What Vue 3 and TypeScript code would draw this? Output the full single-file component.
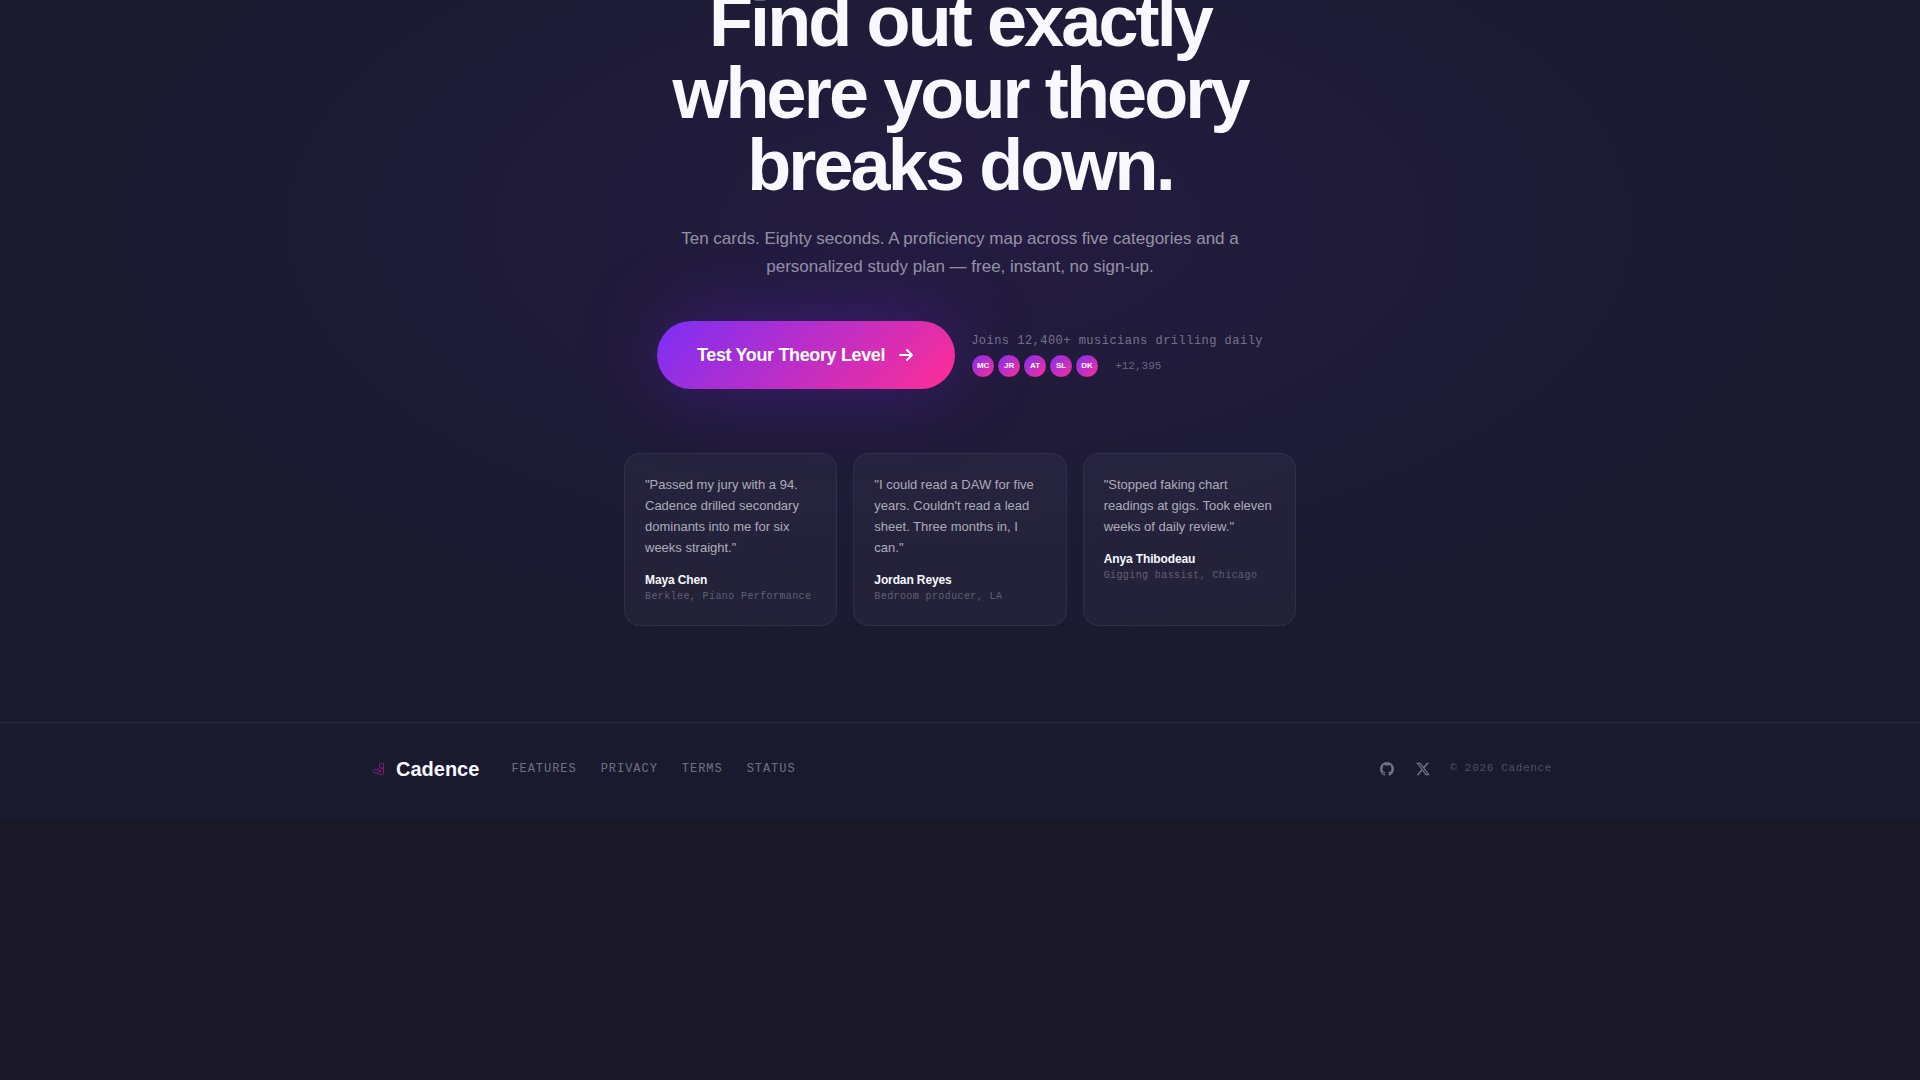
<script setup lang="ts">
interface Quote {
  text: string
  name: string
  role: string
}

const initials: string[] = ['MC', 'JR', 'AT', 'SL', 'DK']

const quotes: Quote[] = [
  {
    text: '"Passed my jury with a 94. Cadence drilled secondary dominants into me for six weeks straight."',
    name: 'Maya Chen',
    role: 'Berklee, Piano Performance',
  },
  {
    text: '"I could read a DAW for five years. Couldn\'t read a lead sheet. Three months in, I can."',
    name: 'Jordan Reyes',
    role: 'Bedroom producer, LA',
  },
  {
    text: '"Stopped faking chart readings at gigs. Took eleven weeks of daily review."',
    name: 'Anya Thibodeau',
    role: 'Gigging bassist, Chicago',
  },
]

const links: string[] = ['Features', 'Privacy', 'Terms', 'Status']
</script>

<template>
  <div class="page">
    <main class="closing">
      <div class="inner">
        <h1>Find out exactly where your theory breaks down.</h1>
        <p class="lead">
          Ten cards. Eighty seconds. A proficiency map across five categories and a personalized
          study plan — free, instant, no sign-up.
        </p>

        <div class="action">
          <button type="button" class="cta">
            Test Your Theory Level
            <svg viewBox="0 0 18 18" width="18" height="18" aria-hidden="true">
              <path d="M3 9h12M10 4l5 5-5 5" />
            </svg>
          </button>
          <div class="proof">
            <p class="joins">Joins 12,400+ musicians drilling daily</p>
            <div class="people">
              <span v-for="i in initials" :key="i" class="avatar">{{ i }}</span>
              <span class="more">+12,395</span>
            </div>
          </div>
        </div>

        <div class="quotes">
          <figure v-for="q in quotes" :key="q.name" class="card">
            <blockquote>{{ q.text }}</blockquote>
            <figcaption>
              <span class="name">{{ q.name }}</span>
              <span class="role">{{ q.role }}</span>
            </figcaption>
          </figure>
        </div>
      </div>
    </main>

    <footer>
      <div class="bar">
        <div class="left">
          <a href="#" class="brand">
            <svg viewBox="0 0 20 20" width="20" height="20" aria-hidden="true">
              <defs>
                <linearGradient id="note" x1="0" y1="0" x2="1" y2="1">
                  <stop offset="0" stop-color="#8a1fd0" />
                  <stop offset="1" stop-color="#e0108c" />
                </linearGradient>
              </defs>
              <path d="M11.500 4.500h4v9.500q0 1.500-1.500 1.500h-2.500q-1.500 0-1.500-1.500h-3.500l-2-2 2-1.500h3l2 2 3.500-3.500h-3.500z" />
              <path d="M9 9.500l4.500 4M10 13.500l2-1.500" />
            </svg>
            Cadence
          </a>
          <nav>
            <a v-for="l in links" :key="l" href="#">{{ l }}</a>
          </nav>
        </div>
        <div class="right">
          <div class="social">
            <a href="#" aria-label="GitHub">
              <svg viewBox="0 0 20 20" width="14" height="14">
                <path transform="translate(-2 -2)" d="M12 2C6.480 2 2 6.480 2 12c0 4.420 2.870 8.170 6.840 9.500.5.080.66-.23.66-.5v-1.690c-2.770.6-3.360-1.340-3.360-1.340-.46-1.160-1.110-1.470-1.110-1.470-.91-.62.070-.6.070-.6 1 .070 1.530 1.030 1.530 1.030.87 1.520 2.340 1.070 2.910.83.090-.65.350-1.090.63-1.340-2.220-.25-4.550-1.110-4.550-4.920 0-1.110.38-2 1.030-2.710-.1-.25-.45-1.290.1-2.640 0 0 .84-.27 2.750 1.020.79-.22 1.650-.33 2.500-.33s1.710.11 2.500.33c1.910-1.290 2.750-1.020 2.750-1.020.55 1.350.2 2.390.1 2.640.65.71 1.030 1.600 1.030 2.710 0 3.820-2.340 4.660-4.570 4.910.36.31.69.92.69 1.850V21c0 .27.16.59.67.5C19.140 20.160 22 16.420 22 12c0-5.520-4.480-10-10-10z" />
              </svg>
            </a>
            <a href="#" aria-label="X">
              <svg viewBox="1 1 22 22" width="14" height="14">
                <path d="M18.244 2.250h3.308l-7.227 8.260 8.502 11.240H16.170l-5.214-6.817L4.990 21.750H1.680l7.730-8.835L1.254 2.250H8.080l4.713 6.231zm-1.161 17.520h1.833L7.084 4.126H5.117z" />
              </svg>
            </a>
          </div>
          <span class="legal">© 2026 Cadence</span>
        </div>
      </div>
    </footer>
  </div>
</template>

<style>
html {
  background: #1a1826;
}
body {
  margin: 0;
}
</style>

<style scoped>
.page {
  overflow: hidden;
  background: #1a1a2e;
  color: #f8f8ff;
  font-family: 'Liberation Sans', Arial, sans-serif;
}
h1,
p,
figure,
blockquote {
  margin: 0;
}
a {
  color: inherit;
  text-decoration: none;
}
svg {
  display: block;
}
.closing {
  padding: 0 24px 96px;
  background: radial-gradient(ellipse 47% 440px at 50% 240px, rgba(124, 45, 237, 0.1), transparent);
}
.inner {
  max-width: 672px;
  margin: 0 auto;
  text-align: center;
}
h1 {
  margin: -15px auto 0;
  max-width: 640px;
  font-size: 72px;
  line-height: 72px;
  letter-spacing: -0.04em;
  font-weight: 700;
}
.lead {
  max-width: 576px;
  margin: 24px auto 0;
  font-size: 17px;
  line-height: 28px;
  color: rgba(248, 248, 255, 0.55);
}
.action {
  display: flex;
  align-items: center;
  justify-content: center;
  gap: 16px;
  margin-top: 40px;
}
.cta {
  display: flex;
  align-items: center;
  gap: 12px;
  height: 68px;
  padding: 0 40px;
  border: 0;
  border-radius: 34px;
  background: linear-gradient(135deg, #7b2ff7, #ff2d95);
  box-shadow: 0 0 80px rgba(110, 30, 220, 0.4);
  color: #fff;
  font: 700 18px/20px 'Liberation Sans', Arial, sans-serif;
  letter-spacing: -0.02em;
  cursor: pointer;
}
.cta svg {
  fill: none;
  stroke: currentColor;
  stroke-width: 2;
  stroke-linecap: round;
  stroke-linejoin: round;
}
.proof {
  text-align: left;
  font-family: 'Liberation Mono', 'Courier New', monospace;
}
.joins {
  font-size: 12px;
  line-height: 18px;
  letter-spacing: 0.04em;
  color: rgba(248, 248, 255, 0.4);
}
.people {
  display: flex;
  align-items: center;
  gap: 2px;
  margin-top: 4px;
}
.avatar {
  box-sizing: border-box;
  width: 24px;
  height: 24px;
  border: 1px solid #1a1a2e;
  border-radius: 50%;
  background: linear-gradient(135deg, #7b2ff7, #ff2d95) border-box;
  color: #fff;
  font: 700 8px/22px 'Liberation Sans', Arial, sans-serif;
  text-align: center;
}
.more {
  margin-left: 14px;
  font-size: 11px;
  line-height: 16px;
  color: rgba(248, 248, 255, 0.35);
}
.quotes {
  display: grid;
  grid-template-columns: repeat(3, 1fr);
  gap: 16px;
  margin-top: 64px;
  text-align: left;
}
.card {
  padding: 20px;
  border: 1px solid rgba(255, 255, 255, 0.06);
  border-radius: 16px;
  background: rgba(255, 255, 255, 0.04);
}
blockquote {
  font-size: 13px;
  line-height: 21px;
  color: rgba(248, 248, 255, 0.65);
}
figcaption {
  display: flex;
  flex-direction: column;
  margin-top: 14px;
}
.name {
  font-size: 12px;
  line-height: 17px;
  font-weight: 700;
  letter-spacing: -0.01em;
}
.role {
  font-family: 'Liberation Mono', 'Courier New', monospace;
  font-size: 10px;
  line-height: 16px;
  letter-spacing: 0.04em;
  color: rgba(248, 248, 255, 0.3);
}
footer {
  border-top: 1px solid rgba(255, 255, 255, 0.08);
  padding: 30px 0 34px;
}
.bar {
  display: flex;
  align-items: center;
  justify-content: space-between;
  max-width: 1184px;
  margin: 0 auto;
  padding: 0 48px;
}
.left,
.right,
.social,
nav,
.brand {
  display: flex;
  align-items: center;
}
.left {
  gap: 32px;
}
.brand {
  gap: 8px;
  font-size: 20px;
  line-height: 32px;
  font-weight: 700;
}
.brand svg {
  fill: none;
  stroke: url(#note);
  stroke-width: 1;
  opacity: 0.6;
}
nav {
  gap: 24px;
  font-family: 'Liberation Mono', 'Courier New', monospace;
  font-size: 12px;
  letter-spacing: 0.08em;
  text-transform: uppercase;
  color: rgba(248, 248, 255, 0.4);
}
.right {
  gap: 20px;
}
.social {
  gap: 22px;
}
.social svg {
  fill: rgba(248, 248, 255, 0.4);
}
.legal {
  padding-bottom: 2px;
  font-family: 'Liberation Mono', 'Courier New', monospace;
  font-size: 11px;
  letter-spacing: 0.06em;
  color: rgba(248, 248, 255, 0.25);
}
</style>
